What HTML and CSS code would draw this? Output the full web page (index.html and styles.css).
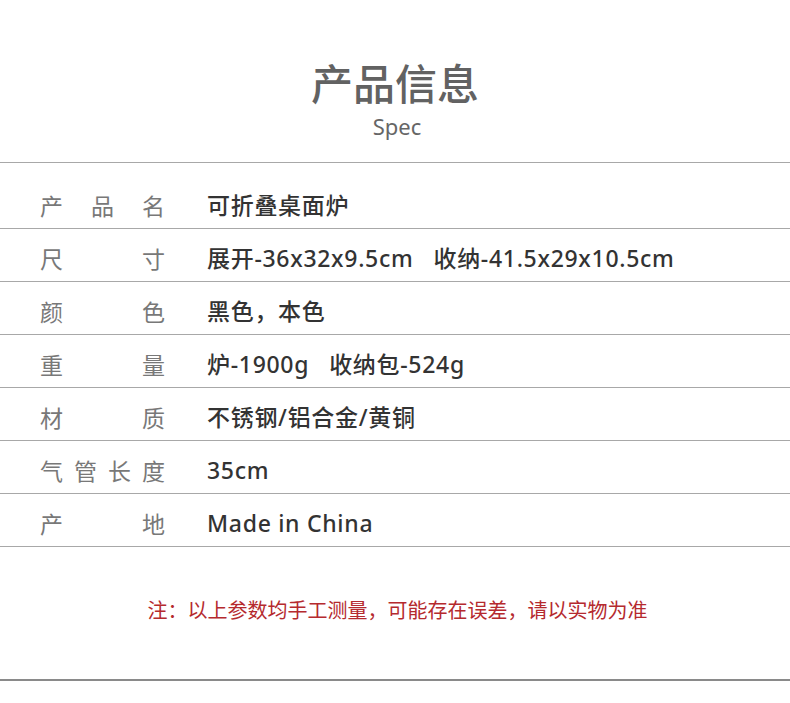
FILE: index.html
```html
<!DOCTYPE html>
<html lang="zh">
<head>
<meta charset="utf-8">
<link rel="stylesheet" href="styles.css">
</head>
<body>
<div class="page">
  <header class="head">
    <h1 class="title">产品信息</h1>
    <div class="sub">Spec</div>
  </header>
  <div class="spec">
    <div class="row first"><span class="label">产品名</span><span class="value">可折叠桌面炉</span></div>
    <div class="row"><span class="label">尺寸</span><span class="value">展开-36x32x9.5cm<span class="gap"></span>收纳-41.5x29x10.5cm</span></div>
    <div class="row"><span class="label">颜色</span><span class="value">黑色，本色</span></div>
    <div class="row"><span class="label">重量</span><span class="value">炉-1900g<span class="gap"></span>收纳包-524g</span></div>
    <div class="row"><span class="label">材质</span><span class="value">不锈钢/铝合金/黄铜</span></div>
    <div class="row"><span class="label">气管长度</span><span class="value">35cm</span></div>
    <div class="row"><span class="label">产地</span><span class="value">Made in China</span></div>
  </div>
  <p class="note">注：以上参数均手工测量，可能存在误差，请以实物为准</p>
  <div class="rule"></div>
</div>
</body>
</html>
```
FILE: styles.css
```css
html, body {
  margin: 0;
  padding: 0;
  background: #ffffff;
}
body {
  font-family: "Noto Sans", "Noto Sans CJK SC", sans-serif;
}
.page {
  width: 790px;
  height: 703px;
  overflow: hidden;
}
.head {
  padding-top: 61px;
  text-align: center;
}
.title {
  margin: 0;
  font-family: "Noto Sans CJK SC", sans-serif;
  font-size: 42px;
  line-height: 42px;
  font-weight: 500;
  color: #626262;
}
.sub {
  margin-top: 10px;
  font-size: 22px;
  line-height: 26px;
  color: #666666;
  padding-left: 4px;
}
.spec {
  margin-top: 23px;
  border-top: 1px solid #a8a8a8;
}
.row {
  display: flex;
  align-items: center;
  height: 52px;
  border-bottom: 1px solid #a8a8a8;
  padding-left: 40px;
}
.row.first {
  height: 52px;
  padding-top: 13px;
}
.label {
  width: 125px;
  font-family: "Noto Sans CJK SC", sans-serif;
  font-size: 23px;
  color: #787878;
  text-align: justify;
  text-align-last: justify;
  line-height: 30px;
  padding-top: 6px;
}
.value {
  margin-left: 42px;
  font-size: 23px;
  font-weight: 500;
  letter-spacing: 0.7px;
  color: #333333;
  line-height: 30px;
  padding-top: 6px;
}
.gap {
  display: inline-block;
  width: 20px;
}
.note {
  margin: 49px 0 0;
  padding-left: 5px;
  text-align: center;
  font-family: "Noto Sans CJK SC", sans-serif;
  font-size: 20px;
  line-height: 28px;
  color: #b52a2e;
}
.rule {
  margin-top: 55px;
  height: 2px;
  background: #8a8a8a;
}
```
